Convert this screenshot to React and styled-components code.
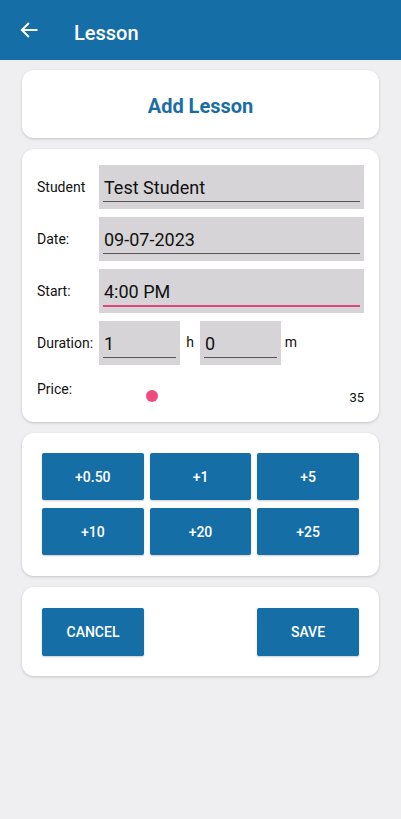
import * as React from "react";
import styled, { createGlobalStyle } from "styled-components";

const GlobalStyle = createGlobalStyle`
    html, body {
        margin: 0;
        padding: 0;
        background: #efeef0;
        font-family: Roboto, "Liberation Sans", sans-serif;
    }
`;

const Screen = styled.div`
    width: 401px;
    height: 819px;
    background: #efeef0;
    display: flex;
    flex-direction: column;
    overflow: hidden;
`;

const Header = styled.div`
    height: 60px;
    background: #166ea7;
    display: flex;
    align-items: center;
    padding-left: 19px;
    flex-shrink: 0;
`;

const BackIcon = styled.svg`
    width: 20px;
    height: 20px;
    margin-top: 0px;
`;

const HeaderTitle = styled.div`
    color: #ffffff;
    font-size: 20px;
    font-weight: 500;
    margin-left: 35px;
    margin-top: 5px;
`;

const Body = styled.div`
    display: flex;
    flex-direction: column;
    gap: 11px;
    padding: 10px 22px 0 22px;
`;

const Card = styled.div`
    background: #ffffff;
    border-radius: 12px;
    box-shadow: 0 1px 3px rgba(0, 0, 0, 0.18);
    padding: ${props => props.pad || "16px 15px"};
`;

const TitleCard = styled(Card)`
    height: 68px;
    box-sizing: border-box;
    display: flex;
    align-items: center;
    justify-content: center;
`;

const Title = styled.div`
    color: #1a6ea6;
    font-size: 20px;
    font-weight: 700;
    margin-top: 4px;
`;

const FieldRow = styled.div`
    display: flex;
    align-items: center;
    margin-bottom: 8px;
`;

const Label = styled.div`
    width: 62px;
    flex-shrink: 0;
    font-size: 14px;
    color: #111;
    align-self: ${props => props.top ? "flex-start" : "center"};
`;

const InputBox = styled.div`
    background: #d6d4d6;
    height: 44px;
    width: ${props => props.w || "265px"};
    box-sizing: border-box;
    padding: 4px 4px 0 4px;
    display: flex;
    flex-direction: column;
`;

const InputText = styled.div`
    font-size: 18px;
    color: #111;
    line-height: 24px;
    padding-left: 1px;
    padding-top: 7px;
    height: 25px;
    border-bottom: ${props => props.focused ? "2px solid #e0457b" : "1px solid #555"};
`;

const Unit = styled.div`
    font-size: 14px;
    color: #111;
    width: 20px;
    text-align: center;
    margin-top: -2px;
`;

const PriceRow = styled.div`
    display: flex;
    align-items: flex-start;
    height: 28px;
    margin-top: 16px;
`;

const SliderArea = styled.div`
    flex: 1;
    position: relative;
    height: 28px;
`;

const Thumb = styled.div`
    position: absolute;
    left: 47px;
    top: 9px;
    width: 12px;
    height: 12px;
    border-radius: 50%;
    background: #ef4b7c;
`;

const PriceValue = styled.div`
    font-size: 13px;
    color: #111;
    margin-top: 9px;
`;

const ButtonGrid = styled.div`
    display: grid;
    grid-template-columns: repeat(3, 1fr);
    column-gap: 6px;
    row-gap: 8px;
`;

const ActionRow = styled.div`
    display: flex;
    justify-content: space-between;
`;

const BlueButton = styled.button`
    height: ${props => props.h || "47px"};
    width: ${props => props.w || "auto"};
    background: #166ea7;
    color: #ffffff;
    border: none;
    border-radius: 2px;
    font-family: Roboto, "Liberation Sans", sans-serif;
    font-size: 14px;
    font-weight: 500;
    box-shadow: 0 1px 2px rgba(0, 0, 0, 0.2);
    padding: 0;
`;

const amounts = ["+0.50", "+1", "+5", "+10", "+20", "+25"];

export default function App() {
    return (
        <Screen>
            <GlobalStyle />
            <Header>
                <BackIcon viewBox="0 0 24 24" fill="none" stroke="#ffffff" strokeWidth="2.4" strokeLinecap="square">
                    <path d="M21 12H4" />
                    <path d="M11 4.5L3.5 12L11 19.5" />
                </BackIcon>
                <HeaderTitle>Lesson</HeaderTitle>
            </Header>
            <Body>
                <TitleCard>
                    <Title>Add Lesson</Title>
                </TitleCard>
                <Card pad="16px 15px 13px 15px">
                    <FieldRow>
                        <Label>Student</Label>
                        <InputBox>
                            <InputText>Test Student</InputText>
                        </InputBox>
                    </FieldRow>
                    <FieldRow>
                        <Label>Date:</Label>
                        <InputBox>
                            <InputText>09-07-2023</InputText>
                        </InputBox>
                    </FieldRow>
                    <FieldRow>
                        <Label>Start:</Label>
                        <InputBox>
                            <InputText focused>4:00 PM</InputText>
                        </InputBox>
                    </FieldRow>
                    <FieldRow>
                        <Label>Duration:</Label>
                        <InputBox w="81px">
                            <InputText>1</InputText>
                        </InputBox>
                        <Unit>h</Unit>
                        <InputBox w="81px">
                            <InputText>0</InputText>
                        </InputBox>
                        <Unit>m</Unit>
                    </FieldRow>
                    <PriceRow>
                        <Label top>Price:</Label>
                        <SliderArea>
                            <Thumb />
                        </SliderArea>
                        <PriceValue>35</PriceValue>
                    </PriceRow>
                </Card>
                <Card pad="20px 20px 21px 20px">
                    <ButtonGrid>
                        {amounts.map(a => (
                            <BlueButton key={a}>{a}</BlueButton>
                        ))}
                    </ButtonGrid>
                </Card>
                <Card pad="21px 20px 20px 20px">
                    <ActionRow>
                        <BlueButton w="102px" h="48px">CANCEL</BlueButton>
                        <BlueButton w="102px" h="48px">SAVE</BlueButton>
                    </ActionRow>
                </Card>
            </Body>
        </Screen>
    );
}
